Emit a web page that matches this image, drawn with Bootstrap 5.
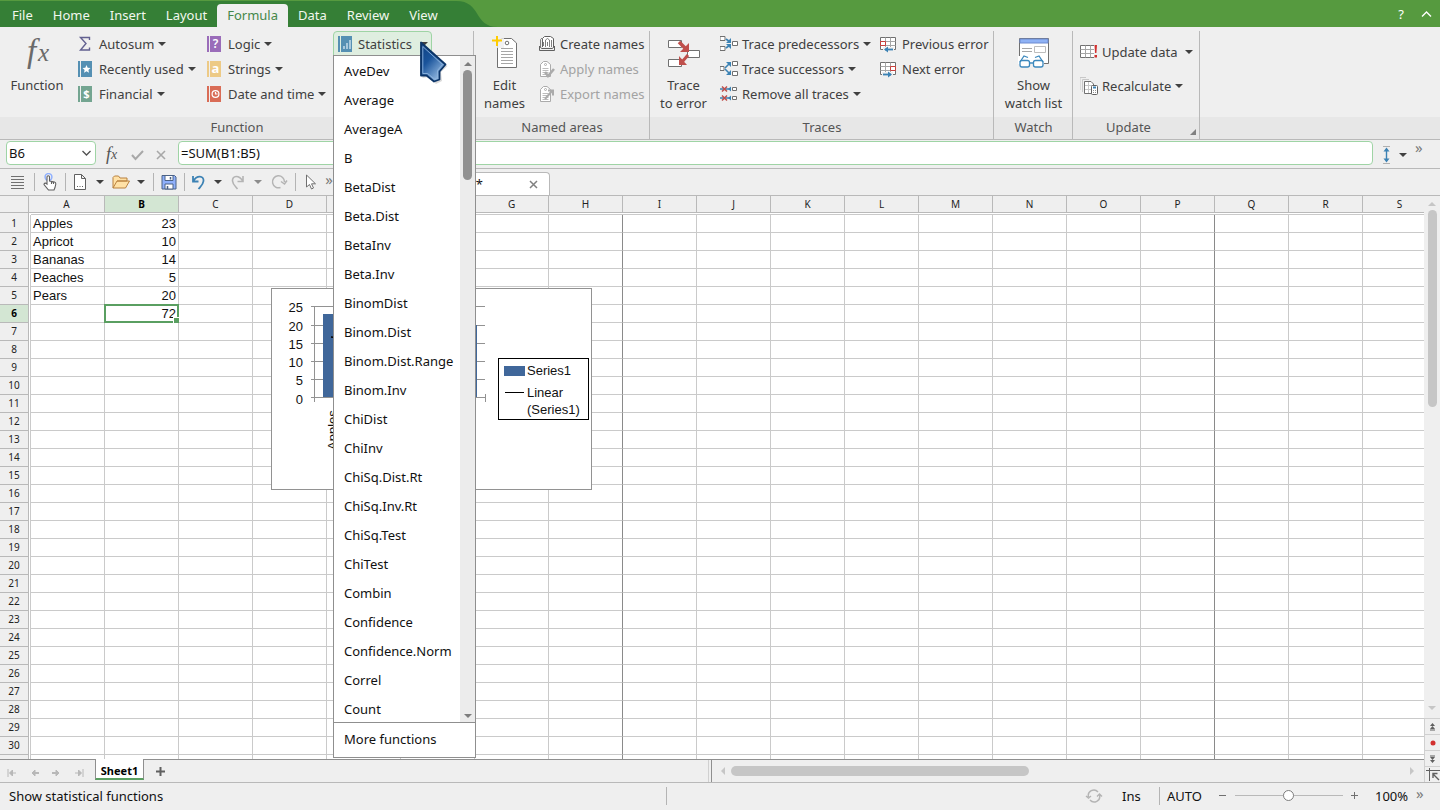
<!DOCTYPE html>
<html lang="en">
<head>
<meta charset="utf-8">
<meta name="viewport" content="width=device-width, initial-scale=1">
<title>PlanMaker</title>
<link href="https://cdn.jsdelivr.net/npm/bootstrap@5.3.0/dist/css/bootstrap.min.css" rel="stylesheet">
<style>
:root{--ui:"Noto Sans",sans-serif;--cell:"Liberation Sans",Arial,sans-serif;--chrome:#efefef;--line:#b9b9b9;--grid:#cacaca;--green:#569a3f;--dark:#357f36;--soft:#9fd4a5}
body{font-family:var(--ui);font-size:13px;line-height:18px;color:#404040;background:var(--chrome);height:100vh;overflow:hidden}
svg{display:block;flex:none}
button{font-family:inherit}
.topbar,.ribbon,.formula-row,.quick,.status,.strip{flex:none}
.topbar{background:var(--green);height:27px;padding-top:1px}
.tabs{background:var(--dark);padding:3px 0 0 2px}
.tabs .nav-link{color:#f2f7ee;padding:2px 10px 3px;line-height:18px;border-radius:4px 4px 0 0}
.tabs .nav-link.active{background:var(--chrome);color:#44874a}
.ribbon{border-bottom:1px solid var(--line);height:113px}
.group{display:flex;flex-direction:column;position:relative}
.group::after{content:"";position:absolute;right:0;top:4px;bottom:0;width:1px;background:var(--line)}
.group-body{height:90px;padding-top:4px;display:flex}
.group-name{background:#e7e7e7;height:22px;line-height:21px;text-align:center;color:#555;width:100%}
.g-function{width:474px}.g-names{width:176px}.g-traces{width:344px}.g-watch{width:79px}.g-update{width:127px}
.big{border:0;background:none;padding:5px 0 0;display:flex;flex-direction:column;align-items:center;color:inherit;text-align:center;line-height:18px}
.big svg{margin-bottom:5px}
.tool{border:1px solid transparent;background:none;height:25px;padding:0 3px 0 2px;display:flex;align-items:center;gap:4px;color:inherit;font-size:13px;white-space:nowrap;border-radius:4px}
.tool:disabled{color:#a3a3a3}
.tool.open{background:#dfeee0;border-color:var(--soft);border-radius:4px 4px 0 0}
.caret{width:0;height:0;border:4px solid transparent;border-top-color:#404040;border-bottom:0;flex:none}
.caret.dim{border-top-color:#8c8c8c}
.fn-grid{display:grid;grid-template-columns:74px 129px 130px auto}
.fmenu{top:24px;left:0;width:143px;padding:0;border:1px solid #8f8f8f;border-radius:0;font-size:13px;color:#111;background:#fff;min-width:0;z-index:20}
.flist{height:calc(100vh - 144px);overflow:hidden;padding-top:1px}
.flist .dropdown-item,.more{padding:5px 10px 6px;line-height:18px;color:#111}
.flist-wrap{border-bottom:1px solid #8f8f8f}
.more{padding:7px 10px 9px}
.vbar{width:15px;background:#ececec;display:flex;flex-direction:column;align-items:center;flex:none;padding:6px 0 4px}
.up,.down{width:0;height:0;border:4px solid transparent}
.up{border-bottom-color:#7d7d7d;border-top:0}.down{border-top-color:#7d7d7d;border-bottom:0}
.thumb{background:#919191;border-radius:5px;width:9px}
.vbar .thumb{height:110px}
.pointer{position:absolute;left:84px;top:9px;z-index:30}
.formula-row{height:29px;border-bottom:1px solid var(--line);padding:1px 0 0 6px}
.field{border:1px solid var(--soft);border-radius:4px;background-color:#fff;color:#111;font-size:13px;line-height:18px;height:24px;padding:0 2px}
.cellref{width:90px;appearance:none;background:#fff url("data:image/svg+xml,%3Csvg xmlns='http://www.w3.org/2000/svg' width='9' height='6'%3E%3Cpath d='M.5 1l4 4 4-4' fill='none' stroke='%23505050' stroke-width='1.3'/%3E%3C/svg%3E") no-repeat right 4px center}
.fx-tools{width:82px;padding:0 12px 0 7px}
.fx-end{width:67px;padding-left:9px;gap:8px}
.quick{height:27px;border-bottom:1px solid var(--line)}
.quick-tools{display:grid;grid-template-columns:34px 1px 30px 1px 28px 12px 30px 10px 8px 30px 1px 28px 10px 30px 9px 33px 1px 28px 10px;justify-items:center;align-items:center}
.quick-tools button,.bare{border:0;background:none;padding:0;display:flex;align-items:center;justify-content:center;color:inherit}
.rule{width:1px;height:18px;background:#b4b4b4;justify-self:end}
.doc-tab{width:216px;background:#fff;border:1px solid var(--line);border-bottom:0;border-radius:0 4px 0 0;margin-top:3px;padding-right:11px;color:#111;gap:46px}
.chev{color:#7a7a7a;font-size:15px;line-height:12px;align-self:flex-start}
.sheet-view{position:relative;overflow:hidden;background:#fff;border-bottom:1px solid #8f8f8f;flex:1 1 0;min-height:0}
.sheet{border-collapse:separate;border-spacing:0;table-layout:fixed;color:#111}
.sheet th{background:var(--chrome);font-weight:400;font-size:10px;line-height:16px;text-align:center;padding:0;border:0 solid var(--line);color:#222}
.sheet thead th{height:17px;border-width:0 1px 1px 0}
.sheet tbody th{height:18px;line-height:17px;border-width:0 1px 1px 0}
.sheet th.on{background:#d3e6d3;font-weight:700;color:#000}
.sheet td{border:0 solid var(--grid);border-width:0 1px 1px 0;padding:1px 2px 0;height:18px;line-height:16px;font-family:var(--cell);font-size:13px;white-space:nowrap}
.sheet tr.edge td,.sheet tr.edge th{height:2px;line-height:0;padding:0}
.sheet tr.edge td{border-width:0 0 1px}
.sheet tr.edge th{border-bottom:0}
.sheet td.lead-in{padding:0;border-bottom:0}
.sheet td.page{border-right-color:#8a8a8a}
.sheet td.num{text-align:right}
.sheet td.sel{position:relative}
.sheet td.sel::before{content:"";position:absolute;inset:-1px;border:2px solid #5a9f61}
.sheet td.sel::after{content:"";position:absolute;right:-1px;bottom:-1px;width:6px;height:6px;background:#5a9f61;border:1px solid #fff;border-width:1px 0 0 1px}
.chart{position:absolute;left:271px;top:92px;font-family:var(--cell);font-size:13px}
.side{width:16px;background:var(--chrome)}
.side-track{padding-top:6px}
.side .thumb,.hbar .thumb{background:#c6c6c6}
.side .up{border-bottom-color:#c6c6c6}.side .down{border-top-color:#c6c6c6}
.side .thumb{height:197px;margin-top:4px}
.side .bare{height:16px;width:16px;border-top:1px solid #d0d0d0;border-left:1px solid #d0d0d0}
.strip{height:22px}
.sheet-tabs{width:49.8%;border-right:1px solid #d0d0d0}
.sheet-tab{margin-top:-1px;height:21px;width:49px;border:1px solid #8f8f8f;border-width:0 1px;background:#fff;border-bottom:2px solid #5a9f61;font-weight:700;font-size:11px;line-height:18px;color:#000;padding:3px 0 0;z-index:2}
.nav-arrows{width:95px;padding:3px 11px 0 7px}
.hbar{border-left:1px solid #8f8f8f;margin-left:2px;padding:0 10px 0 9px}
.left,.right{width:0;height:0;border:4px solid transparent}
.left{border-right-color:#c6c6c6;border-left:0}.right{border-left-color:#c6c6c6;border-right:0}
.hbar .thumb{height:10px;width:43%;margin-left:6px}
.status{border-top:1px solid var(--line);height:28px;color:#111;padding-bottom:2px}
.status-msg{flex:0 0 46.250%;padding-left:9px}
.s-ins{margin-left:19px;width:37px}.s-auto{margin-left:7px;width:52px}.s-pct{margin-left:16px;width:41px}.s-more{width:24px}
.zoom{width:108px;appearance:none;background:none;height:16px}
.zoom::-webkit-slider-runnable-track{height:1px;background:#b9b9b9}
.zoom::-webkit-slider-thumb{appearance:none;width:11px;height:11px;border:1px solid #7d7d7d;border-radius:50%;background:#fff;margin-top:-5px}
</style>
<script src="https://cdn.jsdelivr.net/npm/bootstrap@5.3.0/dist/js/bootstrap.bundle.min.js"></script>
</head>
<body class="d-flex flex-column m-0">
<svg width="0" height="0" class="position-absolute">
 <defs>
  <g id="tag"><path d="M1.500 16.500V4.500L4.500 1.500H8L11.500 4.500V16.500Z" fill="#fff"/><circle cx="6.500" cy="4.500" r="1"/><path d="M3.500 8.500h6M3.500 10.500h6M3.500 12.500h6M3.500 14.500h6" stroke-width=".8"/></g>
  <g id="table16"><path d="M1.500 2.500h15v12h-15z" fill="#fff" stroke="#707070"/><path d="M1.500 6.500h15M1.500 10.500h15M6.500 2.500v12M11.500 2.500v12" stroke="#a6a6a6"/></g>
 </defs>
</svg>

<header class="topbar d-flex">
 <nav class="nav tabs flex-nowrap" aria-label="Ribbon">
  <a class="nav-link" href="#">File</a><a class="nav-link" href="#">Home</a><a class="nav-link" href="#">Insert</a><a class="nav-link" href="#">Layout</a><a class="nav-link active" href="#" aria-current="page">Formula</a><a class="nav-link" href="#">Data</a><a class="nav-link" href="#">Review</a><a class="nav-link" href="#">View</a>
 </nav>
 <svg width="50" height="26" viewBox="0 0 50 26"><path d="M0 0H8C34 0 25 26 50 26H0Z" fill="#357f36"/></svg>
 <div class="ms-auto d-flex align-items-center pe-2">
  <button class="bare text-white me-3" aria-label="Help">?</button>
  <button class="bare" aria-label="Collapse ribbon"><svg width="12" height="8" fill="none" stroke="#fff" stroke-width="1.400"><path d="M2 6.500l4.500-4.500L11 6.500"/></svg></button>
 </div>
</header>

<section class="ribbon d-flex">
 <div class="group g-function">
  <div class="group-body fn-grid">
   <button class="big"><svg width="34" height="35" viewBox="0 0 34 35" overflow="visible" fill="#6a6a6a" font-family="Liberation Serif, serif" font-style="italic"><text x="7" y="26" font-size="33">f</text><text x="18" y="25" font-size="25">x</text></svg>Function</button>
   <div>
    <button class="tool"><svg width="18" height="18" fill="none" stroke="#626090" stroke-width="1.400"><path d="M12.500 5V2.500H3.500L9 8.500L3.500 15H12.500V12.500"/></svg>Autosum<span class="caret"></span></button>
    <button class="tool"><svg width="18" height="18"><path d="M1 1h2v16H1zM4 1h11v16H4z" fill="#5590b3"/><path d="M9.500 5l1.200 2.700 2.800.3-2.100 1.900.6 2.900-2.500-1.500L7 12.800l.6-2.900L5.500 8l2.800-.3z" fill="#fff"/></svg>Recently used<span class="caret"></span></button>
    <button class="tool"><svg width="18" height="18"><path d="M1 1h2v16H1zM4 1h11v16H4z" fill="#74a591"/><text x="9.500" y="13" font-size="11" font-weight="700" fill="#fff" text-anchor="middle">$</text></svg>Financial<span class="caret"></span></button>
   </div>
   <div>
    <button class="tool"><svg width="18" height="18"><path d="M1 1h2v16H1zM4 1h11v16H4z" fill="#9a6cb9"/><text x="9.500" y="13" font-size="12" font-weight="600" fill="#fff" text-anchor="middle">?</text></svg>Logic<span class="caret"></span></button>
    <button class="tool"><svg width="18" height="18"><path d="M1 1h2v16H1zM4 1h11v16H4z" fill="#edca86"/><text x="9.500" y="13" font-size="13" font-weight="700" fill="#fff" text-anchor="middle">a</text></svg>Strings<span class="caret"></span></button>
    <button class="tool"><svg width="18" height="18"><path d="M1 1h2v16H1zM4 1h11v16H4z" fill="#d96c56"/><g fill="none" stroke="#fff" stroke-width="1.200"><circle cx="9.500" cy="9" r="3.400"/><path d="M9.500 7v2h2"/></g></svg>Date and time<span class="caret"></span></button>
   </div>
   <div class="dropdown">
    <button class="tool open" aria-expanded="true"><svg width="18" height="18"><path d="M2 1h2v16H2zM5 1h11v16H5z" fill="#5590b3"/><path d="M7 11h2v3H7zM10 8h2v6h-2zM13 5h2v9h-2z" fill="#a9c9dc"/></svg>Statistics<span class="caret ms-1"></span></button>
    <div class="dropdown-menu fmenu show">
     <div class="d-flex flist-wrap">
      <div class="flist flex-grow-1">
       <a class="dropdown-item" href="#">AveDev</a><a class="dropdown-item" href="#">Average</a><a class="dropdown-item" href="#">AverageA</a><a class="dropdown-item" href="#">B</a><a class="dropdown-item" href="#">BetaDist</a><a class="dropdown-item" href="#">Beta.Dist</a><a class="dropdown-item" href="#">BetaInv</a><a class="dropdown-item" href="#">Beta.Inv</a><a class="dropdown-item" href="#">BinomDist</a><a class="dropdown-item" href="#">Binom.Dist</a><a class="dropdown-item" href="#">Binom.Dist.Range</a><a class="dropdown-item" href="#">Binom.Inv</a><a class="dropdown-item" href="#">ChiDist</a><a class="dropdown-item" href="#">ChiInv</a><a class="dropdown-item" href="#">ChiSq.Dist.Rt</a><a class="dropdown-item" href="#">ChiSq.Inv.Rt</a><a class="dropdown-item" href="#">ChiSq.Test</a><a class="dropdown-item" href="#">ChiTest</a><a class="dropdown-item" href="#">Combin</a><a class="dropdown-item" href="#">Confidence</a><a class="dropdown-item" href="#">Confidence.Norm</a><a class="dropdown-item" href="#">Correl</a><a class="dropdown-item" href="#">Count</a>
      </div>
      <div class="vbar"><span class="up"></span><span class="thumb mt-1"></span><span class="down mt-auto"></span></div>
     </div>
     <a class="dropdown-item more" href="#">More functions</a>
    </div>
    <svg class="pointer" width="32" height="46" viewBox="0 0 32 46"><defs><linearGradient id="pg" x1="0" y1="0" x2=".7" y2="1"><stop offset="0" stop-color="#0d3f80"/><stop offset=".45" stop-color="#1a549b"/><stop offset="1" stop-color="#9cc0e6"/></linearGradient></defs><path d="M5 5L5.500 38L12 37L19 44L25 41L24 32L30.500 26Z" fill="#000" opacity=".15"/><path d="M4 2.500V35.500L9.500 35.500L17 41.500L22.500 39.500L22.500 31.500L28.500 24.500Z" fill="url(#pg)" stroke="#0b3468" stroke-width="1.800" stroke-linejoin="round"/><path d="M5.800 6.500V33.500H10.500L17.500 39L20.500 38L20.500 30.500L25.500 24.500Z" fill="none" stroke="#8fb4de" stroke-width=".9"/></svg>
   </div>
  </div>
  <div class="group-name">Function</div>
 </div>

 <div class="group g-names">
  <div class="group-body">
   <button class="big" style="width:61px"><svg width="34" height="35" viewBox="0 0 34 35" fill="none" stroke="#707070"><path d="M9.500 31.500V7L13.500 2.500H23.500L28.500 7V31.500Z" fill="#fff"/><circle cx="19" cy="7" r="1.800"/><path d="M13 12.500h12M13 15.500h12M13 18.500h12M13 21.500h12M13 24.500h12M13 27.500h12" stroke="#a6a6a6"/><path d="M2 0h14v12H2z" fill="#efefef" stroke="none" opacity=".8"/><path d="M9 -1v11M4 4.500h10" stroke="#fc0" stroke-width="2"/></svg>Edit<br>names</button>
   <div>
    <button class="tool"><svg width="18" height="18" fill="none" stroke="#606060"><path d="M4.500 12V3.500L6.500 1.500h6l3 2V12" fill="#fff"/><path d="M2.500 12V4.500L4 3M7.500 12V5l2-1.500L11.500 5v7M13.500 12V5M9.500 7v4M5.500 7v4" stroke="#808080"/><path d="M1.500 11v4.500h15V11l-2 2.500H3.500z" fill="#efefef"/></svg>Create names</button>
    <button class="tool" disabled><svg width="18" height="18" fill="none" stroke="#ababab"><use href="#tag" x="1"/><path d="M7 12l3 4 6-7" stroke-width="2.600"/></svg>Apply names</button>
    <button class="tool" disabled><svg width="18" height="18" fill="none" stroke="#ababab"><use href="#tag" x="1"/><path d="M7 14l7-8M10 5.500h5v5" stroke-width="2"/></svg>Export names</button>
   </div>
  </div>
  <div class="group-name">Named areas</div>
 </div>

 <div class="group g-traces">
  <div class="group-body">
   <button class="big" style="width:67px"><svg width="34" height="35" viewBox="0 0 34 35"><g fill="#fff" stroke="#707070"><path d="M1.500 4.500h13v7h-13zM20.500 14.500h12v7h-12zM1.500 23.500h13v7h-13z"/></g><path d="M12 6L19 13" stroke="#bf4f4b" stroke-width="3.500"/><path d="M22 16v-9l-9 9z" fill="#bf4f4b"/><path d="M21 19L15 26" stroke="#bf4f4b" stroke-width="3"/><path d="M12 29v-9l8 9z" fill="#bf4f4b"/></svg>Trace<br>to error</button>
   <div style="width:160px">
    <button class="tool"><svg width="18" height="18"><g fill="#fff" stroke="#707070"><path d="M0 1.500h5v4H0zM0 11.500h5v4H0zM12.500 6.500h5v4h-5z"/></g><path d="M6 4l4 3M6 13l4-3" stroke="#3c82b4" stroke-width="1.600"/><path d="M11 3v5H6zM11 14V9H6z" fill="#3c82b4"/></svg>Trace predecessors<span class="caret"></span></button>
    <button class="tool"><svg width="18" height="18"><g fill="#fff" stroke="#707070"><path d="M0 6.500h4v4H0zM12.500 1.500h5v4h-5zM12.500 11.500h5v4h-5z"/></g><path d="M5 8l4-4M5 9l4 4" stroke="#3c82b4" stroke-width="1.600"/><path d="M6 2h5v5zM6 15h5v-5z" fill="#3c82b4"/></svg>Trace successors<span class="caret"></span></button>
    <button class="tool"><svg width="18" height="18"><g fill="#fff" stroke="#707070"><path d="M12.500 2.500h4v3h-4zM12.500 11.500h4v3h-4z"/></g><path d="M0 4h11M0 13h11" stroke="#3c82b4" stroke-width="1.500"/><path d="M8 4l3-2.500v5zM8 13l3-2.500v5z" fill="#3c82b4"/><path d="M2 1.500l5 5M7 1.500l-5 5M2 10.500l5 5M7 10.500l-5 5" stroke="#bf4f4b" stroke-width="1.500"/></svg>Remove all traces<span class="caret"></span></button>
   </div>
   <div>
    <button class="tool"><svg width="18" height="18" fill="none"><use href="#table16" x="-1"/><path d="M.5 6.500h5v4h-5z" stroke="#c8403c"/><path d="M3 12h11v5H3z" fill="#efefef"/><path d="M5 14.500h8" stroke="#3c82b4" stroke-width="1.800"/><path d="M4 14.500l4-3v6z" fill="#3c82b4"/></svg>Previous error</button>
    <button class="tool"><svg width="18" height="18" fill="none"><use href="#table16" x="-1"/><path d="M10.500 6.500h5v4h-5z" stroke="#c8403c"/><path d="M2 12h11v5H2z" fill="#efefef"/><path d="M3 14.500h8" stroke="#3c82b4" stroke-width="1.800"/><path d="M12 14.500l-4-3v6z" fill="#3c82b4"/></svg>Next error</button>
   </div>
  </div>
  <div class="group-name">Traces</div>
 </div>

 <div class="group g-watch">
  <div class="group-body">
   <button class="big w-100"><svg width="34" height="35" viewBox="0 0 34 35" fill="none" stroke="#707070"><path d="M2.500 2.500h29v25h-29z" fill="#fff"/><path d="M3 3h28v4H3z" fill="#8fb2f5" stroke="#6d8bd0"/><path d="M5 12.500h10M5 15.500h10" stroke="#a6a6a6"/><path d="M17.500 10.500h11v6h-11z" stroke="#bdbdbd"/><path d="M1 20h26v12H1z" fill="#fff" stroke="none"/><path d="M1 28h27v5H1z" fill="#efefef" stroke="none"/><g stroke="#3c88bd" stroke-width="1.300"><rect x="3" y="24.500" width="9.500" height="6.500" rx="2" fill="#fff"/><rect x="16.500" y="24.500" width="9.500" height="6.500" rx="2" fill="#fff"/><path d="M12.500 27h4M3 26l4-6 4 1.500M26 26l-4-6-4 1.500"/></g></svg>Show<br>watch list</button>
  </div>
  <div class="group-name">Watch</div>
 </div>

 <div class="group g-update">
  <div class="group-body flex-column ps-1" style="padding-top:12px;gap:9px">
   <button class="tool"><svg width="18" height="18" fill="none"><use href="#table16" x="-1"/><path d="M14 2h4v13h-4z" fill="#efefef"/><path d="M14.500 2h2.500l-.6 8h-1.300zM14.500 12h2.500v2.500h-2.500z" fill="#d2302f"/></svg>Update data<span class="caret ms-1"></span></button>
   <button class="tool"><svg width="18" height="18" fill="none" stroke="#c8c8c8"><path d="M0 13V.5h6M2.500 15V2.500H9"/><path d="M4.500 16.500V4.500H11L13.500 7v9.500z" fill="#fff" stroke="#707070"/><path d="M5 8.500h8M5 12.500h8M8.500 5v11"/><rect x="11.500" y="8.500" width="6" height="9" rx="1" fill="#fff" stroke="#606060"/><path d="M13 10.500h3" stroke="#3c82b4" stroke-width="2"/><path d="M13 13.500h3M13 15.500h3" stroke="#909090" stroke-dasharray="1 1"/></svg>Recalculate<span class="caret"></span></button>
  </div>
  <div class="group-name position-relative pe-3">Update<svg class="position-absolute end-0 bottom-0 me-1 mb-1" width="6" height="6" viewBox="0 0 6 6"><path d="M6 0v6H0z" fill="#808080"/></svg></div>
 </div>
 <div class="flex-grow-1"><div class="group-body"></div><div class="group-name"></div></div>
</section>

<section class="formula-row d-flex">
 <select class="field cellref" aria-label="Cell"><option>B6</option></select>
 <div class="fx-tools d-flex align-items-center justify-content-between">
  <button class="bare" aria-label="Insert function"><svg width="15" height="20" overflow="visible" fill="#555" font-family="Liberation Serif, serif" font-style="italic"><text x="3" y="15" font-size="18">f</text><text x="8" y="14" font-size="14">x</text></svg></button>
  <button class="bare" aria-label="Accept" disabled><svg width="13" height="12" fill="none" stroke="#a8a8a8" stroke-width="2"><path d="M1 6l3.500 4L12 2"/></svg></button>
  <button class="bare" aria-label="Cancel" disabled><svg width="10" height="10" fill="none" stroke="#a8a8a8" stroke-width="1.600"><path d="M1 1l8 8M9 1l-8 8"/></svg></button>
 </div>
 <input class="field flex-grow-1" aria-label="Formula" value="=SUM(B1:B5)">
 <div class="fx-end d-flex align-items-center">
  <button class="bare" aria-label="Row height"><svg width="9" height="20" fill="none"><path d="M1 1.500h7M1 18.500h7" stroke="#b0b0b0"/><path d="M4.500 4v12" stroke="#3c82b4" stroke-width="1.400"/><path d="M4.500 2.500l3 4h-6zM4.500 17.500l3-4h-6z" fill="#3c82b4"/></svg></button>
  <span class="caret"></span><span class="chev">»</span>
 </div>
</section>

<section class="quick d-flex">
 <div class="quick-tools">
  <button aria-label="Menu"><svg width="14" height="14" stroke="#707070"><path d="M1 1.500h13M1 4.500h13M1 7.500h13M1 10.500h13M1 13.500h13"/></svg></button>
  <span class="rule"></span>
  <button aria-label="Touch mode"><svg width="14" height="18" viewBox="0 0 14 18" fill="none"><circle cx="5.500" cy="4" r="3.400" stroke="#8fb0ff" stroke-width="1.500"/><path d="M4 11V4a1.200 1.200 0 0 1 2.500 0V8l5 1c1 .3 1.400 1 1.300 2L12 14.500 11 17H5.500L1 11.500C1 10 2.500 9.500 4 11zM8.500 8.500v2.500M10.500 9v2" fill="#fff" stroke="#606060" stroke-width="1.100"/></svg></button>
  <span class="rule"></span>
  <button aria-label="New"><svg width="14" height="18" fill="#fff" stroke="#606060"><path d="M1.500 1.500h7l4 4v11h-11zM8.500 1.500v4h4"/><path d="M4 13.500h6" stroke-dasharray="1 1.500"/></svg></button>
  <span class="caret"></span>
  <button aria-label="Open"><svg width="18" height="16" fill="#ffe1a6" stroke="#b9813f" stroke-linejoin="round"><path d="M1 14V3.500L2.500 2h4L8 4h7v3H5L1 14h12.500L17.500 7H5"/></svg></button>
  <span class="caret"></span>
  <span class="rule"></span>
  <button aria-label="Save"><svg width="16" height="16"><path d="M1 1.500h12.500l1.500 1.500v12H1z" fill="#8fb0fb" stroke="#4b6285"/><path d="M4 1.500h8v5H4zM4 10h8v5H4z" fill="#fff" stroke="#4b6285"/><path d="M9.500 3v2.500M6.500 12v3" stroke="#4b6285" stroke-width="1.500"/></svg></button>
  <span class="rule"></span>
  <button aria-label="Undo"><svg width="16" height="16" fill="none" stroke="#3c82b4" stroke-width="1.800"><path d="M2 2v5.500h5.500M2 7.500C6 .5 13 1.500 12.500 7c-.3 3.500-3 5.500-5 8"/></svg></button>
  <span class="caret"></span>
  <button aria-label="Redo" disabled><svg width="16" height="16" fill="none" stroke="#b4b4b4" stroke-width="1.600"><path d="M13 2v5.500H7.500M13 7.500C9 .5 2 1.500 2.500 7c.3 3.500 3 5.500 5 8"/></svg></button>
  <span class="caret dim"></span>
  <button aria-label="Repeat" disabled><svg width="18" height="16" fill="none" stroke="#b4b4b4" stroke-width="1.500"><path d="M10.500 13.500A6 6 0 1 1 14.500 8M11 7.500l3.500 2.500 2.500-3.500"/></svg></button>
  <span class="rule"></span>
  <button aria-label="Select"><svg width="11" height="16" fill="#fff" stroke="#707070"><path d="M1.500 1v12l3-2.500 2 4.500 2-1-2-4.200h4z"/></svg></button>
  <span class="chev pt-1">»</span>
 </div>
 <div class="doc-tab d-flex align-items-center justify-content-end"><span>*</span><button class="bare" aria-label="Close"><svg width="9" height="9" stroke="#808080" stroke-width="1.500"><path d="M1 1l7 7M8 1l-7 7"/></svg></button></div>
</section>

<main class="d-flex flex-grow-1 overflow-hidden">
 <div class="d-flex flex-column flex-grow-1 overflow-hidden">
  <div class="sheet-view" id="view">
   <table class="sheet" id="sheet"><colgroup id="cols"></colgroup><thead><tr id="heads"></tr></thead><tbody id="rows"></tbody></table>
   <svg class="chart" width="321" height="202" viewBox="0 0 321 202">
    <rect x=".5" y=".5" width="320" height="201" fill="#fff" stroke="#929292"/>
    <path d="M43.500 18v96M40 18.500H214M40 37.500H214M40 55.500H214M40 73.500H214M40 91.500H214M40 109.500H214M214.500 106v8" stroke="#929292" fill="none"/>
    <path d="M52 26h17v83H52zM86 73h17v36H86zM120 58h17v51h-17zM155 91h17v18h-17zM189 37h17v72h-17z" fill="#40679a"/>
    <path d="M60 49L197 65" stroke="#000" stroke-width="1.500"/>
    <g text-anchor="end" fill="#111"><text x="32" y="24">25</text><text x="32" y="43">20</text><text x="32" y="61">15</text><text x="32" y="79">10</text><text x="32" y="97">5</text><text x="32" y="116">0</text></g>
    <text transform="translate(66 162) rotate(-90)" fill="#111">Apples</text>
    <rect x="227.500" y="70.500" width="90" height="61" fill="#fff" stroke="#000"/>
    <path d="M233 78h21v10h-21z" fill="#40679a"/><path d="M234 104.500h19" stroke="#000"/>
    <g fill="#111"><text x="256" y="87">Series1</text><text x="256" y="109">Linear</text><text x="256" y="126">(Series1)</text></g>
   </svg>
  </div>
  <div class="strip d-flex">
   <div class="sheet-tabs d-flex">
    <div class="nav-arrows d-flex align-items-center justify-content-between">
     <button class="bare" aria-label="First sheet"><svg width="10" height="8" stroke="#b8b8b8" fill="#b8b8b8"><path d="M1 0v8M5 4h4" /><path d="M2.500 4l3-3v6z"/></svg></button>
     <button class="bare" aria-label="Previous sheet"><svg width="8" height="8" stroke="#b8b8b8" fill="#b8b8b8"><path d="M4 4h4" stroke-width="2"/><path d="M1 4l3-3v6z"/></svg></button>
     <button class="bare" aria-label="Next sheet"><svg width="8" height="8" stroke="#b8b8b8" fill="#b8b8b8"><path d="M0 4h4" stroke-width="2"/><path d="M7 4l-3-3v6z"/></svg></button>
     <button class="bare" aria-label="Last sheet"><svg width="10" height="8" stroke="#b8b8b8" fill="#b8b8b8"><path d="M9 0v8M1 4h4"/><path d="M7.500 4l-3-3v6z"/></svg></button>
    </div>
    <button class="sheet-tab">Sheet1</button>
    <button class="bare ms-2 ps-1" aria-label="Add sheet"><svg width="9" height="9" stroke="#606060" stroke-width="2"><path d="M4.500 0v9M0 4.500h9"/></svg></button>
   </div>
   <div class="hbar d-flex align-items-center flex-grow-1"><span class="left"></span><span class="thumb"></span><span class="right ms-auto"></span></div>
  </div>
 </div>
 <div class="side d-flex flex-column">
  <div class="side-track d-flex flex-column align-items-center flex-grow-1"><span class="up"></span><span class="thumb"></span><span class="down mt-auto mb-2"></span></div>
  <button class="bare" aria-label="Previous object"><svg width="7" height="8" fill="#606060"><path d="M3.500 0L6 3H1zM3.500 3L6 6H1zM1 6.500h5v1H1z"/></svg></button>
  <button class="bare" aria-label="Browse by"><svg width="6" height="6"><circle cx="3" cy="3" r="2.500" fill="#d2302f"/></svg></button>
  <button class="bare" aria-label="Next object"><svg width="7" height="8" fill="#606060"><path d="M1 .5h5v1H1zM1 2h5L3.500 5zM1 5h5L3.500 8z"/></svg></button>
  <button class="bare" aria-label="Go to cell"><svg width="14" height="14" fill="none" stroke="#606060"><path d="M0 2.500h14M3.500 0v13" /><path d="M7 6l6 6M7 10V5.500h4.500" stroke-width="1.400"/></svg></button>
 </div>
</main>

<footer class="status d-flex align-items-center">
 <div class="status-msg">Show statistical functions</div>
 <span class="rule align-self-center"></span>
 <div class="ms-auto d-flex align-items-center">
  <svg width="18" height="16" fill="none" stroke="#b4b4b4" stroke-width="1.400"><path d="M3.500 9A5.500 5.500 0 0 1 13 4M14.500 7A5.500 5.500 0 0 1 5 12M1 8l2.500 2L6 8M12 8.500L14.500 6 17 8.500"/></svg>
  <span class="s-ins">Ins</span><span class="rule align-self-center"></span>
  <span class="s-auto">AUTO</span>
  <button class="bare" aria-label="Zoom out"><svg width="8" height="9" stroke="#707070"><path d="M0 4.500h7"/></svg></button>
  <input class="zoom mx-2" type="range" min="0" max="100" value="49" aria-label="Zoom">
  <button class="bare" aria-label="Zoom in"><svg width="8" height="9" stroke="#707070"><path d="M0 4.500h7M3.500 1v7"/></svg></button>
  <span class="s-pct">100%</span><span class="chev s-more">»</span>
 </div>
</footer>

<script>
// Build as many rows and columns as the view can show; pages break after H and P.
const data = {1:['Apples',23],2:['Apricot',10],3:['Bananas',14],4:['Peaches',5],5:['Pears',20],6:['',72]};
const el = id => document.getElementById(id);
function build() {
  const colCount = Math.min(26, Math.ceil((el('view').clientWidth - 31) / 74));
  const rowCount = Math.max(6, Math.floor((el('view').clientHeight - 19) / 18));
  const names = [...'ABCDEFGHIJKLMNOPQRSTUVWXYZ'].slice(0, colCount);
  el('sheet').style.width = 31 + 74 * colCount + 'px';
  el('cols').innerHTML = '<col style="width:29px"><col style="width:2px">' + names.map(() => '<col style="width:74px">').join('');
  el('heads').innerHTML = '<th></th>' + names.map((n, i) => `<th${i ? '' : ' colspan="2"'}${n === 'B' ? ' class="on"' : ''}>${n}</th>`).join('');
  let html = '<tr class="edge"><th></th><td class="lead-in"></td>' + names.map(() => '<td></td>').join('') + '</tr>';
  for (let r = 1; r <= rowCount + 1; r++) {
    html += `<tr><th${r === 6 ? ' class="on"' : ''}>${r <= rowCount ? r : ''}</th><td class="lead-in"></td>` + names.map((n, i) => {
      const v = data[r] && data[r][i] !== undefined ? data[r][i] : '';
      const c = [(n === 'H' || n === 'P') && 'page', typeof v === 'number' && 'num', r === 6 && n === 'B' && 'sel'].filter(Boolean).join(' ');
      return `<td${c ? ` class="${c}"` : ''}>${v}</td>`;
    }).join('') + '</tr>';
  }
  el('rows').innerHTML = html;
}
build();
addEventListener('resize', build);
</script>
</body>
</html>
